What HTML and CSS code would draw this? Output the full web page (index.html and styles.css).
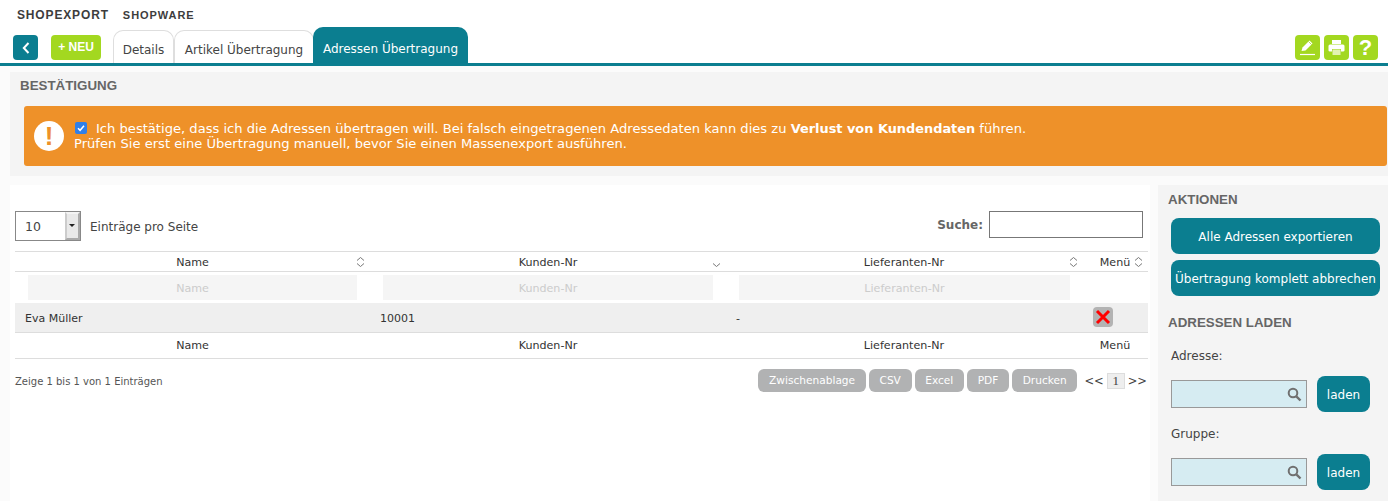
FILE: index.html
```html
<!DOCTYPE html>
<html lang="de">
<head>
<meta charset="utf-8">
<title>Shopexport</title>
<link rel="stylesheet" href="styles.css">
</head>
<body>
<header class="top">
  <div class="crumbs"><span class="crumb-a">SHOPEXPORT</span><span class="crumb-b">SHOPWARE</span></div>
  <div class="tabbar">
    <a class="back" href="#"><svg width="10" height="14" viewBox="0 0 10 14"><path d="M7.500 2 L2.800 7 L7.500 12" fill="none" stroke="#fff" stroke-width="2"/></svg></a>
    <a class="new" href="#">+ NEU</a>
    <nav class="tabs">
      <a class="tab tab-details" href="#">Details</a>
      <a class="tab tab-artikel" href="#">Artikel Übertragung</a>
      <a class="tab tab-active" href="#">Adressen Übertragung</a>
    </nav>
    <div class="tools">
      <a class="tool" href="#"><svg width="19" height="19" viewBox="0 0 19 19"><path d="M3.500 13 L4.500 9.500 L11.500 2.500 L14.500 5.500 L7.500 12.500 Z" fill="#fff"/><path d="M10.500 3.500 L13.500 6.500" stroke="#a3d820" stroke-width=".8"/><path d="M2 16.500 H17" stroke="#fff" stroke-width="1.200"/></svg></a>
      <a class="tool" href="#"><svg width="19" height="19" viewBox="0 0 19 19"><path d="M5 2 H14 V6 H5 Z" fill="#fff"/><path d="M3 6.500 H16 Q17.500 6.500 17.500 8 V12.500 Q17.500 13.500 16 13.500 H14 V11 H5 V13.500 H3 Q1.500 13.500 1.500 12.500 V8 Q1.500 6.500 3 6.500 Z" fill="#fff"/><path d="M5.500 11.500 H13.500 V17 H5.500 Z" fill="#e3f3b4"/></svg></a>
      <a class="tool tool-help" href="#">?</a>
    </div>
  </div>
</header>

<main class="content">
  <section class="confirm">
    <h2 class="heading">BESTÄTIGUNG</h2>
    <div class="alert">
      <span class="alert-icon">!</span>
      <div class="alert-text">
        <div><span class="fake-check"><svg width="12" height="12" viewBox="0 0 12 12"><path d="M3 6.200 L5.100 8.300 L9 3.800" fill="none" stroke="#fff" stroke-width="1.500"/></svg></span>Ich bestätige, dass ich die Adressen übertragen will. Bei falsch eingetragenen Adressedaten kann dies zu <b>Verlust von Kundendaten</b> führen.</div>
        <div>Prüfen Sie erst eine Übertragung manuell, bevor Sie einen Massenexport ausführen.</div>
      </div>
    </div>
  </section>

  <div class="columns">
    <section class="main-col">
      <div class="table-controls">
        <div class="length">
          <span class="select"><span class="select-val">10</span><span class="select-btn"></span></span>
          <span class="length-text">Einträge pro Seite</span>
        </div>
        <label class="search">Suche:<span class="search-box"></span></label>
      </div>
      <table class="grid">
        <colgroup><col class="c1"><col class="c2"><col class="c3"><col class="c4"></colgroup>
        <thead>
          <tr class="head-row">
            <th><span>Name</span><svg class="sort" width="9" height="12" viewBox="0 0 9 12"><path d="M1 4.500 L4.500 1.500 L8 4.500 M1 7.500 L4.500 10.500 L8 7.500" fill="none" stroke="#777" stroke-width="1"/></svg></th>
            <th><span>Kunden-Nr</span><svg class="sort" width="9" height="12" viewBox="0 0 9 12"><path d="M1 7.500 L4.500 10.500 L8 7.500" fill="none" stroke="#777" stroke-width="1"/></svg></th>
            <th><span>Lieferanten-Nr</span><svg class="sort" width="9" height="12" viewBox="0 0 9 12"><path d="M1 4.500 L4.500 1.500 L8 4.500 M1 7.500 L4.500 10.500 L8 7.500" fill="none" stroke="#777" stroke-width="1"/></svg></th>
            <th><span>Menü</span><svg class="sort" width="9" height="12" viewBox="0 0 9 12"><path d="M1 4.500 L4.500 1.500 L8 4.500 M1 7.500 L4.500 10.500 L8 7.500" fill="none" stroke="#777" stroke-width="1"/></svg></th>
          </tr>
          <tr class="filter-row">
            <td><span class="filter">Name</span></td>
            <td><span class="filter">Kunden-Nr</span></td>
            <td><span class="filter">Lieferanten-Nr</span></td>
            <td></td>
          </tr>
        </thead>
        <tbody>
          <tr class="data-row">
            <td>Eva Müller</td>
            <td>10001</td>
            <td>-</td>
            <td class="menu-cell"><span class="del"><svg width="16" height="16" viewBox="0 0 16 16"><path d="M2 2 L14 14 M14 2 L2 14" stroke="#f00" stroke-width="3"/></svg></span></td>
          </tr>
        </tbody>
        <tfoot>
          <tr class="foot-row"><th>Name</th><th>Kunden-Nr</th><th>Lieferanten-Nr</th><th>Menü</th></tr>
        </tfoot>
      </table>
      <div class="table-footer">
        <div class="info">Zeige 1 bis 1 von 1 Einträgen</div>
        <div class="exports">
          <a class="exp" href="#">Zwischenablage</a>
          <a class="exp" href="#">CSV</a>
          <a class="exp" href="#">Excel</a>
          <a class="exp" href="#">PDF</a>
          <a class="exp" href="#">Drucken</a>
        </div>
        <div class="pager"><span>&lt;&lt;</span><span class="page">1</span><span>&gt;&gt;</span></div>
      </div>
    </section>

    <aside class="side">
      <h2 class="heading side-head">AKTIONEN</h2>
      <a class="btn-wide" href="#">Alle Adressen exportieren</a>
      <a class="btn-wide" href="#">Übertragung komplett abbrechen</a>
      <h2 class="heading side-head2">ADRESSEN LADEN</h2>
      <div class="field-label">Adresse:</div>
      <div class="field">
        <span class="lookup"><svg width="15" height="15" viewBox="0 0 15 15"><circle cx="6" cy="6" r="4.300" fill="none" stroke="#707070" stroke-width="2"/><path d="M9.300 9.300 L13.500 13.500" stroke="#707070" stroke-width="2.400"/></svg></span>
        <a class="btn-load" href="#">laden</a>
      </div>
      <div class="field-label">Gruppe:</div>
      <div class="field">
        <span class="lookup"><svg width="15" height="15" viewBox="0 0 15 15"><circle cx="6" cy="6" r="4.300" fill="none" stroke="#707070" stroke-width="2"/><path d="M9.300 9.300 L13.500 13.500" stroke="#707070" stroke-width="2.400"/></svg></span>
        <a class="btn-load" href="#">laden</a>
      </div>
    </aside>
  </div>
</main>
</body>
</html>
```
FILE: styles.css
```css
* { box-sizing: border-box; }
html, body { margin: 0; padding: 0; height: 501px; overflow: hidden; }
body { background: #fff; color: #444; font-family: "DejaVu Sans", Verdana, sans-serif; font-size: 11px; }
a { text-decoration: none; color: inherit; }

.top { height: 66px; background: #fff; border-bottom: 3px solid #0b7e90; }
.crumbs { height: 27px; padding: 8px 0 0 17px; font-family: "Liberation Sans", Arial, sans-serif; font-weight: 700; color: #3d3d3d; line-height: 15px; display: flex; }
.crumb-a { font-size: 12px; letter-spacing: .85px; margin-right: 14px; }
.crumb-b { font-size: 11px; letter-spacing: .95px; }
.tabbar { display: flex; height: 36px; position: relative; align-items: flex-end; padding-left: 13px; }
.back { width: 25px; height: 25px; margin-bottom: 3px; background: #0b7e90; border-radius: 4px; display: flex; align-items: center; justify-content: center; }
.new { width: 50px; height: 25px; margin: 0 0 3px 13px; background: #a3d820; border-radius: 4px; color: #fff; font: 700 12px/25px "Liberation Sans", Arial, sans-serif; text-align: center; }
.tabs { display: flex; margin-left: 12px; align-items: flex-end; }
.tab { display: block; font-size: 12px; }
.tab-details, .tab-artikel { height: 33px; border: 1px solid #dedede; border-bottom: 0; border-radius: 10px 10px 0 0; padding-top: 11px; line-height: 16px; text-align: center; color: #444; }
.tab-details { width: 61px; }
.tab-artikel { width: 140px; }
.tab-active { width: 155px; height: 36px; background: #0b7e90; color: #fff; border-radius: 10px 10px 0 0; line-height: 16px; padding-top: 14px; text-align: center; margin-left: -1px; }
.tools { margin-left: auto; display: flex; gap: 4px; padding-right: 10px; margin-bottom: 3px; }
.tool { width: 25px; height: 25px; background: #a3d820; border-radius: 4px; display: flex; align-items: center; justify-content: center; color: #fff; }
.tool-help { font: 700 22px/25px "Liberation Sans", Arial, sans-serif; }

.content { height: 435px; background: #fbfbfb; padding: 6px 0 0 10px; }
.heading { margin: 0; font: 700 13.330px/16px "Liberation Sans", Arial, sans-serif; color: #666; }
.confirm { height: 104px; background: #f4f4f4; padding: 6px 1px 0 10px; }
.alert { height: 60px; margin: 12px 0 0 4px; background: #ee9129; border-radius: 3px; display: flex; color: #fff; padding: 15px 0 0 10px; }
.alert-icon { width: 30px; height: 30px; border-radius: 50%; background: #fff; color: #ee9129; font: 700 26px/30px "Liberation Sans", Arial, sans-serif; text-align: center; flex: none; }
.alert-text { margin-left: 10px; font-size: 13.100px; line-height: 15px; }
.alert-text b { font-size: 12.900px; }
.fake-check { display: inline-block; width: 12px; height: 12px; margin: 0 9px 0 1px; border-radius: 2px; background: #2f7fe8; vertical-align: -1px; line-height: 0; }

.columns { display: flex; margin-top: 9px; height: 316px; }
.main-col { width: 1140px; background: #fff; padding: 0 2px 0 5px; }
.table-controls { display: flex; justify-content: space-between; align-items: flex-start; height: 66px; padding: 26px 5px 0 0; }
.length { display: flex; align-items: center; gap: 9px; font-size: 12px; }
.length-text { padding-top: 2px; }
.select { width: 66px; height: 30px; border: 1px solid #888; display: flex; justify-content: space-between; background: #fff; }
.select-val { padding: 7px 0 0 9px; font-size: 12.500px; line-height: 16px; }
.select-btn { width: 15px; background: #e9e9e9; border: 2px solid; border-color: #f4f4f4 #aaa #aaa #ccc; position: relative; }
.select-btn::after { content: ""; position: absolute; left: 2px; top: 10px; border: 3.500px solid transparent; border-top-color: #222; border-bottom: 0; }
.search { display: flex; align-items: center; gap: 6px; font-weight: 700; font-size: 12px; color: #666; }
.search-box { width: 154px; height: 27px; border: 1px solid #777; background: #fff; display: block; }

.grid { width: 1133px; border-collapse: collapse; table-layout: fixed; }
.c1 { width: 355px; } .c2 { width: 356px; } .c3 { width: 356px; } .c4 { width: 66px; }
.grid th { font-weight: 400; font-size: 11.100px; line-height: 14px; color: #333; padding: 0; text-align: center; position: relative; }
.head-row { height: 20px; border-top: 1px solid #ddd; border-bottom: 1px solid #ddd; }
.head-row th { padding-top: 2px; }
.sort { position: absolute; right: 5px; top: 4px; }
.head-row th:nth-child(3) .sort { right: 4px; }
.filter-row { height: 31px; }
.filter-row td { padding: 3px 13px; }
.filter { display: block; height: 25px; background: #f5f5f5; color: #ccc; text-align: center; font-size: 11.100px; line-height: 27px; }
.filter-row td:nth-child(3) .filter { margin-right: -1px; }
.data-row { height: 29px; background: #efefef; border-bottom: 1px solid #ddd; }
.data-row td { padding: 2px 10px 0; font-size: 11px; color: #333; }
.data-row .menu-cell { padding-top: 0; text-align: left; }
.del { display: block; width: 20px; height: 20px; margin-left: 1px; background: #b3b3b3; border-radius: 4px; padding: 2px; line-height: 0; }
.foot-row { height: 26px; border-bottom: 1px solid #ddd; }
.foot-row th { padding-top: 2px; }

.table-footer { display: flex; align-items: center; margin-top: 10px; height: 24px; }
.info { font-size: 10px; color: #555; margin-right: auto; padding-top: 2px; }
.exports { display: flex; gap: 3px; }
.exp { height: 23px; background: #b1b2b3; border-radius: 6px; color: #fff; font-size: 10.600px; line-height: 22px; padding: 0 10.700px; }
.pager { display: flex; flex: none; align-items: center; gap: 3px; margin: 0 1px 0 7px; font-size: 11.500px; color: #444; }
.page { flex: none; width: 18px; height: 16px; background: #eee; border: 1px solid #ddd; text-align: center; line-height: 14px; font-family: "Liberation Serif", serif; font-size: 13px; }

.side { width: 230px; margin-left: 8px; background: #f4f4f4; padding: 7px 8px 0 10px; height: 316px; }
.side-head { margin-bottom: 10px; }
.btn-wide { display: block; margin: 0 0 6px 3px; width: 209px; height: 36px; background: #0b7e90; border-radius: 8px; color: #fff; text-align: center; line-height: 38px; font-size: 12px; white-space: nowrap; }
.side-head2 { margin-top: 19px; margin-bottom: 0; }
.field-label { margin: 17px 0 0 3px; font-size: 12px; line-height: 16px; color: #444; }
.field + .field-label { margin-top: 14px; }
.field-label + .field { margin-top: 12px; }
.field { display: flex; gap: 10px; margin-left: 3px; align-items: center; height: 36px; }
.lookup { width: 136px; height: 28px; background: #d6ecf2; border: 1px solid #999; display: flex; justify-content: flex-end; align-items: center; padding-right: 4px; }
.btn-load { width: 53px; height: 36px; background: #0b7e90; border-radius: 8px; color: #fff; text-align: center; line-height: 38px; font-size: 12px; }
```
